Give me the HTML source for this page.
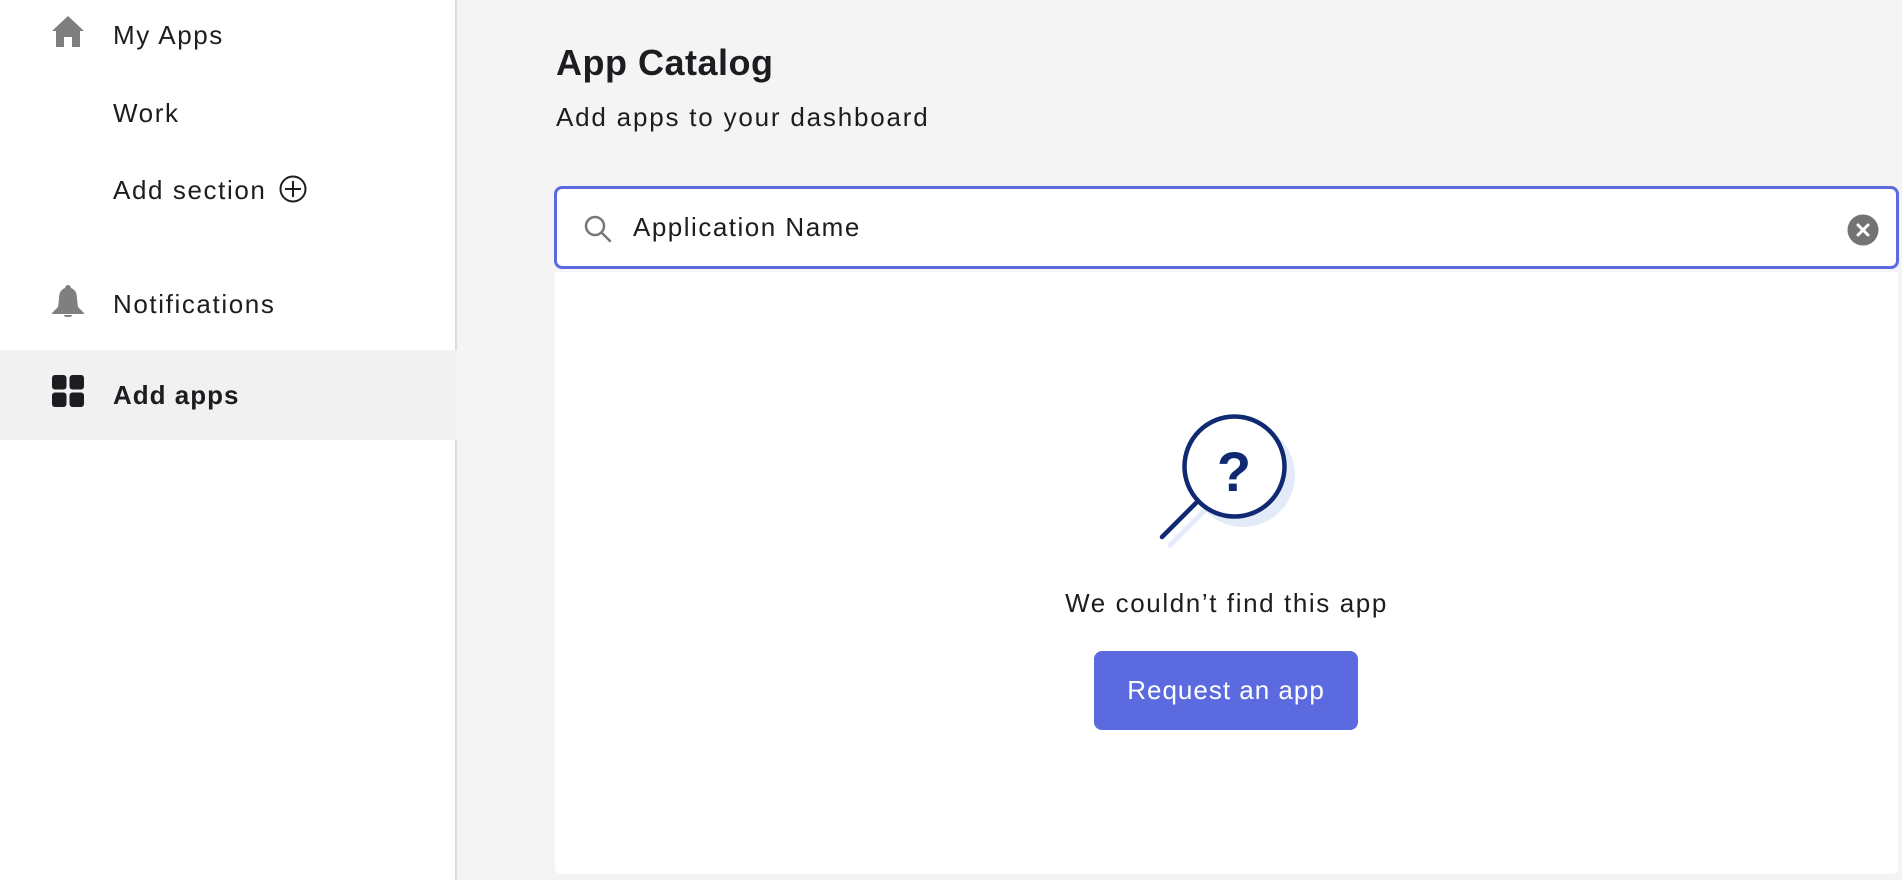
<!DOCTYPE html>
<html><head><meta charset="utf-8"><style>
*{margin:0;padding:0;box-sizing:border-box}
body{width:1902px;height:880px;background:#f4f4f4;font-family:"Liberation Sans",sans-serif;color:#1d1d21;position:relative;overflow:hidden}
.side{position:absolute;left:0;top:0;width:457px;height:880px;background:#fff;border-right:2px solid #dcdcdc}
.item{position:absolute;left:113px;font-size:26px;line-height:30px;letter-spacing:1.6px}
.ico{position:absolute;left:52px}
.active{position:absolute;left:0;top:350px;width:457px;height:90px;background:#f1f1f1}
.title{position:absolute;left:556px;top:42px;font-size:36px;font-weight:bold;letter-spacing:0.5px}
.sub{position:absolute;left:556px;top:102px;font-size:26px;letter-spacing:1.8px}
.search{position:absolute;left:554px;top:186px;width:1345px;height:83px;border:3px solid #5b6bdf;border-radius:8px;background:#fff}
.panel{position:absolute;left:555px;top:272px;width:1343px;height:602px;background:#fff;border-radius:0 0 6px 6px}
.msg{position:absolute;top:588px;text-align:center;font-size:26px;left:555px;width:1343px;letter-spacing:1.6px}
.btn{position:absolute;left:1094px;top:651px;width:264px;height:79px;background:#5b6bdf;border-radius:8px;color:#fff;font-size:26px;text-align:center;line-height:79px;letter-spacing:1px}
</style></head><body>
<div class="side">
<div class="active"></div>
<svg class="ico" style="top:15px" width="32" height="32" viewBox="0 0 32 32"><path d="M16 1 L32 16 L28 16 L28 32 L20 32 L20 22 L12 22 L12 32 L4 32 L4 16 L0 16 Z" fill="#7f7f7f"/></svg>
<div class="item" style="top:20px">My Apps</div>
<div class="item" style="top:98px">Work</div>
<div class="item" style="top:175px">Add section <svg style="vertical-align:-4px;margin-left:4px" width="28" height="28" viewBox="0 0 28 28"><circle cx="14" cy="14" r="12.5" fill="none" stroke="#1d1d21" stroke-width="2"/><path d="M14 6V22M6 14H22" stroke="#1d1d21" stroke-width="2"/></svg></div>
<svg class="ico" style="top:285px" width="32" height="32" viewBox="0 0 32 32"><path d="M16 0 C18 0 19 2 19 3 C24 5 25 9 25 14 L26 22 L32 28 L32 29 L0 29 L0 28 L6 22 L7 14 C7 9 8 5 13 3 C13 2 14 0 16 0Z M12 30 L20 30 C20 32 18 32 16 32 C14 32 12 32 12 30Z" fill="#7f7f7f"/></svg>
<div class="item" style="top:289px">Notifications</div>
<svg class="ico" style="top:375px" width="32" height="32" viewBox="0 0 32 32"><rect x="0" y="0" width="14.5" height="14.5" rx="3" fill="#1d1d21"/><rect x="17.5" y="0" width="14.5" height="14.5" rx="3" fill="#1d1d21"/><rect x="0" y="17.5" width="14.5" height="14.5" rx="3" fill="#1d1d21"/><rect x="17.5" y="17.5" width="14.5" height="14.5" rx="3" fill="#1d1d21"/></svg>
<div class="item" style="top:380px;font-weight:bold;letter-spacing:1px">Add apps</div>
</div>
<div class="title">App Catalog</div>
<div class="sub">Add apps to your dashboard</div>
<div class="panel"></div>
<div class="search">
<svg style="position:absolute;left:27px;top:26px" width="28" height="28" viewBox="0 0 28 28"><circle cx="11" cy="11" r="9" fill="none" stroke="#777" stroke-width="2.5"/><path d="M17.5 17.5L26 26" stroke="#777" stroke-width="2.5" stroke-linecap="round"/></svg>
<div style="position:absolute;left:76px;top:23px;font-size:26px;letter-spacing:1.5px">Application Name</div>
<svg style="position:absolute;left:1290px;top:25px" width="32" height="32" viewBox="0 0 32 32"><circle cx="16" cy="16" r="15.5" fill="#737373"/><path d="M11 11L21 21M21 11L11 21" stroke="#fff" stroke-width="3" stroke-linecap="round"/></svg>
</div>
<svg style="position:absolute;left:1150px;top:405px" width="160" height="150" viewBox="1150 405 160 150">
<circle cx="1243" cy="475" r="52" fill="#e3eaf8"/>
<path d="M1170 545L1204 511" stroke="#e3eaf8" stroke-width="5" stroke-linecap="round"/>
<circle cx="1234.5" cy="466.5" r="50" fill="#fff" stroke="#0f2a72" stroke-width="4.5"/>
<path d="M1162 537L1197 502" stroke="#0f2a72" stroke-width="4.5" stroke-linecap="round"/>
<text x="1234" y="491" text-anchor="middle" font-family="Liberation Sans" font-weight="bold" font-size="56" fill="#0f2a72">?</text>
</svg>
<div class="msg">We couldn’t find this app</div>
<div class="btn">Request an app</div>
</body></html>
